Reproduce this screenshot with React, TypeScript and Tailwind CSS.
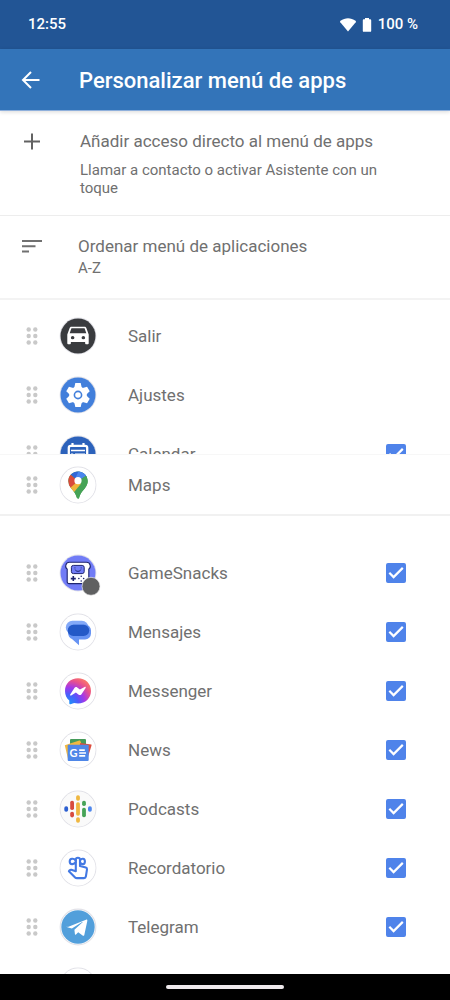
import type { ReactNode } from "react";

type AppEntry = { name: string; icon: ReactNode; checkable?: boolean };

function Disc({ fill = "#ffffff", r = 17.5 }: { fill?: string; r?: number }) {
  return (
    <>
      <circle cx="18" cy="18" r="17.8" fill="#fff" stroke="#e2e2e8" strokeWidth="1.2" />
      <circle cx="18" cy="18" r={r} fill={fill} />
    </>
  );
}

function IconFrame({ children }: { children: ReactNode }) {
  return (
    <svg viewBox="0 0 36 36" className="size-9 shrink-0 overflow-visible" aria-hidden="true">
      {children}
    </svg>
  );
}

const carIcon = (
  <IconFrame>
    <Disc fill="#393b3e" />
    <path
      transform="translate(18 17.5) scale(1.19 1.1) translate(-12 -13)"
      fill="#fff"
      fillRule="evenodd"
      d="M18.92 6.01C18.72 5.42 18.16 5 17.5 5h-11c-.66 0-1.21.42-1.42 1.01L3 12v8c0 .55.45 1 1 1h1c.55 0 1-.45 1-1v-1h12v1c0 .55.45 1 1 1h1c.55 0 1-.45 1-1v-8l-2.08-5.99zM7.5 16.5a1.5 1.5 0 1 1 0-3 1.5 1.5 0 0 1 0 3zm9 0a1.5 1.5 0 1 1 0-3 1.5 1.5 0 0 1 0 3zM5 11l1.5-4.5h11L19 11H5z"
    />
  </IconFrame>
);

const settingsIcon = (
  <IconFrame>
    <Disc fill="#427fdb" />
    <g fill="#fff">
      <circle cx="18" cy="18" r="8.8" />
      {[0, 60, 120].map((angle) => (
        <path
          key={angle}
          transform={`rotate(${angle} 18 18)`}
          d="M15.3 6h5.4l1 4.5v15l-1 4.5h-5.4l-1-4.5v-15z"
        />
      ))}
    </g>
    <circle cx="18" cy="18" r="3.6" fill="#fff" stroke="#427fdb" strokeWidth="1.6" />
  </IconFrame>
);

const calendarIcon = (
  <IconFrame>
    <Disc fill="#2c62bb" />
    <rect x="8.8" y="9.8" width="18.4" height="17.4" rx="2" fill="none" stroke="#fff" strokeWidth="2.3" />
    <path d="M12.5 7v4M23.5 7v4" stroke="#fff" strokeWidth="2.2" />
    <path d="M11 14.6h14M11 18.2h2.2M15 18.2h10" stroke="#fff" strokeWidth="1.5" />
  </IconFrame>
);

const mapsIcon = (
  <IconFrame>
    <Disc />
    <clipPath id="pin">
      <path d="M18 4.4c5.4 0 9.7 4.3 9.7 9.6 0 2.6-1 4.8-2.5 6.8-2.4 3.2-4.7 5-6 9.8-.2.8-.5 1.2-1.2 1.2s-1-.4-1.200-1.200c-1.300-4.800-3.600-6.600-6-9.800A11 11 0 0 1 8.300 14c0-5.300 4.300-9.600 9.700-9.600z" />
    </clipPath>
    <g clipPath="url(#pin)">
      <path d="M0 0h36v36H0z" fill="#46a356" />
      <path d="M18 14 9.500 6.500 5 9v12h6.500z" fill="#d94a3b" />
      <path d="M18 14 31 8.500 29 0h-6L10.500-1 6 4l5 3.800z" fill="#3267d6" />
      <path d="m18 14 9-5.400L24 3l-4-2-4.500 10z" fill="#4a86ee" />
      <path d="M18 14 13 25.500 18 34l16-15-7-11z" fill="#46a356" />
      <path d="m18 14-8.500 7.500 3.800 4.500L20.800 17z" fill="#f1b43b" />
    </g>
    <circle cx="18" cy="13.700" r="3.600" fill="#fff" />
  </IconFrame>
);

const gameIcon = (
  <IconFrame>
    <Disc fill="#717cf6" />
    <path
      d="M9.500 7.300h17c4 0 5 5 2.300 6.800v12.600c0 1.100-.8 1.900-1.900 1.900H9.100c-1.100 0-1.900-.8-1.900-1.900V14.100C4.500 12.300 5.500 7.300 9.500 7.300z"
      fill="#fff"
      stroke="#1f256f"
      strokeWidth="1.100"
    />
    <rect x="11.400" y="10.400" width="12.800" height="8.200" rx="2" fill="#717cf6" stroke="#1f256f" strokeWidth="1" />
    <path d="M15.300 15c.8 1.900 4.600 1.900 5.400 0M14.900 12.900h.1M21.100 12.900h.1" fill="none" stroke="#1f256f" strokeWidth="1" strokeLinecap="round" />
    <path d="M10.800 23.600h5M13.300 21.100v5" stroke="#1f256f" strokeWidth="1.600" />
    <path d="M21.200 21.200v.1M21.200 26v.1M18.800 23.600h.1M23.600 23.600h.1" stroke="#1f256f" strokeWidth="1.500" strokeLinecap="round" />
    <circle cx="31" cy="31.300" r="9" fill="#5f6061" stroke="#e9e9e9" strokeWidth=".7" />
  </IconFrame>
);

const messagesIcon = (
  <IconFrame>
    <Disc />
    <rect x="5.800" y="6.700" width="22.700" height="13.500" rx="6.700" fill="#83a9f8" />
    <path d="M14 10.500h11a6 6 0 0 1 6 6v3a6 6 0 0 1-6 6h-6v5.800L12 25c-2.600-1.200-4-3.500-4-6.500v-2a6 6 0 0 1 6-6z" fill="#6793f3" />
    <rect x="7.700" y="10.800" width="21.500" height="11.200" rx="5.600" fill="#2459c7" />
  </IconFrame>
);

const messengerIcon = (
  <IconFrame>
    <Disc />
    <defs>
      <radialGradient id="messenger" cx="12%" cy="100%" r="112%">
        <stop offset="0" stopColor="#139af8" />
        <stop offset=".35" stopColor="#4e5bfb" />
        <stop offset=".58" stopColor="#a238ea" />
        <stop offset=".82" stopColor="#e8518d" />
        <stop offset="1" stopColor="#f9756a" />
      </radialGradient>
    </defs>
    <path
      d="M18 5.300c7.400 0 13 5.400 13 12.600s-5.600 12.500-13 12.500c-1.400 0-2.700-.2-3.900-.5l-3.600 1.300c-.8.200-1.200-.2-1.200-.9V27.500C6.600 25.200 5 21.800 5 17.900 5 10.700 10.600 5.300 18 5.300z"
      fill="url(#messenger)"
    />
    <path d="m10.200 21.500 4.200-6.500c.7-1 1.800-1.200 2.800-.5l2.700 2.100 4.700-2.700c.8-.4 1.500.2 1 1l-4.100 6.300c-.7 1-1.800 1.200-2.800.5l-2.800-2.100-4.700 2.900c-.8.400-1.500-.3-1-1z" fill="#fff" />
  </IconFrame>
);

const newsIcon = (
  <IconFrame>
    <Disc />
    <rect x="10" y="7" width="16" height="12" rx="1" fill="#469b5a" />
    <path d="m4.800 13.200 14.500-4.600c.6-.2 1 0 1.200.6L24 19 8 27z" fill="#f2b840" />
    <path d="m31.300 12.500-11-1.500L18 20l9 8 4.500-14.500c.1-.6.100-.9-.2-1z" fill="#dc4d3f" />
    <rect x="7.700" y="12.800" width="21" height="16.200" rx="1" fill="#4f87e8" />
    <text x="9.600" y="25" fill="#fff" fontFamily="Lato, sans-serif" fontSize="11" fontWeight="700">
      G
    </text>
    <path d="M19.200 18.100h5.600M19.200 21H26M19.200 23.900h6" stroke="#fff" strokeWidth="1.600" />
  </IconFrame>
);

const podcastBars: [number, number, number, string][] = [
  [4.3, 15.3, 5.4, "#2c5fd0"],
  [10.2, 9.7, 9.3, "#d84c3f"],
  [10.2, 20.7, 5.7, "#d84c3f"],
  [16.1, 4.3, 5.4, "#efb741"],
  [16.1, 11.3, 13.4, "#efb741"],
  [16.1, 26.3, 5.4, "#efb741"],
  [22.1, 9.7, 5.4, "#46a357"],
  [22.1, 16.7, 9.6, "#46a357"],
  [28, 15.3, 5.4, "#4d86ec"],
];

const podcastsIcon = (
  <IconFrame>
    <Disc fill="#fafafa" />
    {podcastBars.map(([x, y, height, fill]) => (
      <rect key={`${x}-${y}`} x={x} y={y} width="3.8" height={height} rx="1.8" fill={fill} />
    ))}
  </IconFrame>
);

const reminderIcon = (
  <IconFrame>
    <Disc />
    <g fill="none" stroke="#4379e3" strokeWidth="2.1" strokeLinejoin="round" strokeLinecap="round">
      <path d="M15.800 21.200V9.700c0-2.700 4.200-2.700 4.200 0v6.300l5.800 1.500c.9.300 1.300.9 1.200 1.800l-1.100 7.100c-.2 1.200-.8 1.700-1.900 1.700h-7c-.9 0-1.400-.2-1.900-.7l-6.200-6.200.8-.9c.5-.5 1-.6 1.600-.5z" />
      <path d="M15.800 10.600C14 8 9.700 7.900 9.700 11.400s4.300 3.500 6.100.8M20 10.600c1.300-2.600 4.900-2.700 4.900.8s-3.600 3.500-4.900.8" />
    </g>
  </IconFrame>
);

const telegramIcon = (
  <IconFrame>
    <Disc fill="#529fdb" r={16.7} />
    <path
      d="M7.200 18.200 26 10.700c.9-.3 1.500.2 1.300 1.200l-3 14c-.2 1-.9 1.200-1.700.7l-4.400-3.300-2.200 2.100c-.5.500-1 .4-1.100-.3l-.5-4.400 8.200-7.400c.4-.3 0-.5-.5-.2l-10.200 6.400-4.700-1.300c-.6-.1-.6-.6 0-.9z"
      fill="#fff"
    />
  </IconFrame>
);

const topApps: AppEntry[] = [
  { name: "Salir", icon: carIcon },
  { name: "Ajustes", icon: settingsIcon },
  { name: "Calendar", icon: calendarIcon, checkable: true },
];

const bottomApps: AppEntry[] = [
  { name: "GameSnacks", icon: gameIcon, checkable: true },
  { name: "Mensajes", icon: messagesIcon, checkable: true },
  { name: "Messenger", icon: messengerIcon, checkable: true },
  { name: "News", icon: newsIcon, checkable: true },
  { name: "Podcasts", icon: podcastsIcon, checkable: true },
  { name: "Recordatorio", icon: reminderIcon, checkable: true },
  { name: "Telegram", icon: telegramIcon, checkable: true },
];

function DragHandle() {
  return (
    <svg viewBox="0 0 24 24" className="size-6 shrink-0" fill="#c9c9c9" aria-hidden="true">
      {[8.7, 15.3].map((cx) =>
        [5.5, 12, 18.5].map((cy) => <circle key={`${cx}-${cy}`} cx={cx} cy={cy} r="2.2" />),
      )}
    </svg>
  );
}

function CheckBox({ id }: { id: string }) {
  return (
    <span className="grid size-5 shrink-0">
      <input
        id={id}
        type="checkbox"
        defaultChecked
        className="peer col-start-1 row-start-1 size-5 appearance-none rounded-xs border-2 border-[#757575] bg-white checked:border-[#4f83ea] checked:bg-[#4f83ea]"
      />
      <svg
        viewBox="0 0 20 20"
        className="pointer-events-none invisible col-start-1 row-start-1 size-5 peer-checked:visible"
        aria-hidden="true"
      >
        <path d="m3.3 9.800 4.300 4.300 9.200-9.200" fill="none" stroke="#fff" strokeWidth="2.2" />
      </svg>
    </span>
  );
}

function AppRow({ app }: { app: AppEntry }) {
  const id = `app-${app.name.toLowerCase()}`;
  return (
    <div className="flex h-[59px] shrink-0 items-center pr-11 pl-5">
      <DragHandle />
      <div className="mr-8 ml-4 flex">{app.icon}</div>
      {app.checkable ? (
        <>
          <label htmlFor={id} className="flex-1 text-[17px] leading-6">
            {app.name}
          </label>
          <CheckBox id={id} />
        </>
      ) : (
        <span className="flex-1 text-[17px] leading-6">{app.name}</span>
      )}
    </div>
  );
}

export default function App() {
  return (
    <div className="flex h-screen flex-col overflow-hidden bg-white font-[Roboto,sans-serif] text-[#707070]">
      <div className="flex h-[49px] shrink-0 items-center justify-between bg-[#225595] pr-8 pl-7 text-[15px] font-medium text-white">
        <span>12:55</span>
        <div className="flex items-center">
          <svg viewBox="0 0 16 14" className="mr-1.5 h-3.5 w-4" fill="#fff" aria-hidden="true">
            <path d="M8 13.500.3 4.200C-.1 3.700 0 3.200.5 2.800 5-.7 11-.7 15.500 2.800c.5.400.6.900.2 1.400z" />
          </svg>
          <svg viewBox="0 0 10 14" className="mr-1.5 h-3.5 w-2.5" fill="#fff" aria-hidden="true">
            <path d="M3 0h4v1.300h1.300c.5 0 .9.400.9.900v10.700c0 .5-.4.900-.9.900H1.700c-.5 0-.9-.4-.9-.9V2.200c0-.5.400-.9.900-.9H3z" />
          </svg>
          <span>100 %</span>
        </div>
      </div>

      <header className="relative flex h-[62px] shrink-0 items-center border-b border-[#8fb0dc] bg-[#3374b9] pl-5 text-white shadow-[0_1px_4px_rgba(0,0,0,0.15)]">
        <button type="button" aria-label="Atrás" className="mr-[35px] size-6">
          <svg viewBox="0 0 24 24" className="size-6" fill="none" stroke="#fff" strokeWidth="2" aria-hidden="true">
            <path d="M19.500 12H3.500M11 4l-8 8 8 8" />
          </svg>
        </button>
        <h1 className="pt-0.5 text-[22px] leading-7 font-medium">Personalizar menú de apps</h1>
      </header>

      <main className="flex min-h-0 flex-1 flex-col overflow-hidden">
        <button
          type="button"
          className="flex shrink-0 items-start border-b border-[#ededed] pt-[18px] pr-12 pb-[18px] pl-5 text-left"
        >
          <svg viewBox="0 0 24 24" className="mr-9 size-6 shrink-0" stroke="#626262" strokeWidth="2" aria-hidden="true">
            <path d="M4 12.500h16M12 4.500v16" />
          </svg>
          <span className="flex flex-col gap-2">
            <span className="text-[17px] leading-6">Añadir acceso directo al menú de apps</span>
            <span className="text-[15px] leading-[18px]">Llamar a contacto o activar Asistente con un toque</span>
          </span>
        </button>

        <button
          type="button"
          className="flex shrink-0 items-start border-b-2 border-[#f3f3f3] pt-[18px] pr-12 pb-5 pl-5 text-left"
        >
          <svg viewBox="0 0 24 24" className="mr-[34px] size-6 shrink-0" stroke="#707070" strokeWidth="2" aria-hidden="true">
            <path d="M2 7h20M2 12.300h13.500M2 17.600h7" />
          </svg>
          <span className="flex flex-col">
            <span className="text-[17px] leading-6">Ordenar menú de aplicaciones</span>
            <span className="text-[15px] leading-5">A-Z</span>
          </span>
        </button>

        <div className="flex shrink-0 flex-col pt-1.5">
          {topApps.map((app) => (
            <AppRow key={app.name} app={app} />
          ))}
        </div>

        <div className="relative -mt-[29px] mb-[27px] shrink-0 border-t border-b-2 border-t-[#f7f7f7] border-b-[#f1f1f1] bg-white">
          <AppRow app={{ name: "Maps", icon: mapsIcon }} />
        </div>

        <div className="flex shrink-0 flex-col">
          {bottomApps.map((app) => (
            <AppRow key={app.name} app={app} />
          ))}
          <div className="flex h-[59px] items-center pl-[60px]">
            <IconFrame>
              <Disc />
            </IconFrame>
          </div>
        </div>
      </main>

      <div className="flex h-[26px] shrink-0 items-center justify-center bg-black">
        <div className="h-1 w-[118px] rounded-full bg-[#eee9ec]" />
      </div>
    </div>
  );
}
